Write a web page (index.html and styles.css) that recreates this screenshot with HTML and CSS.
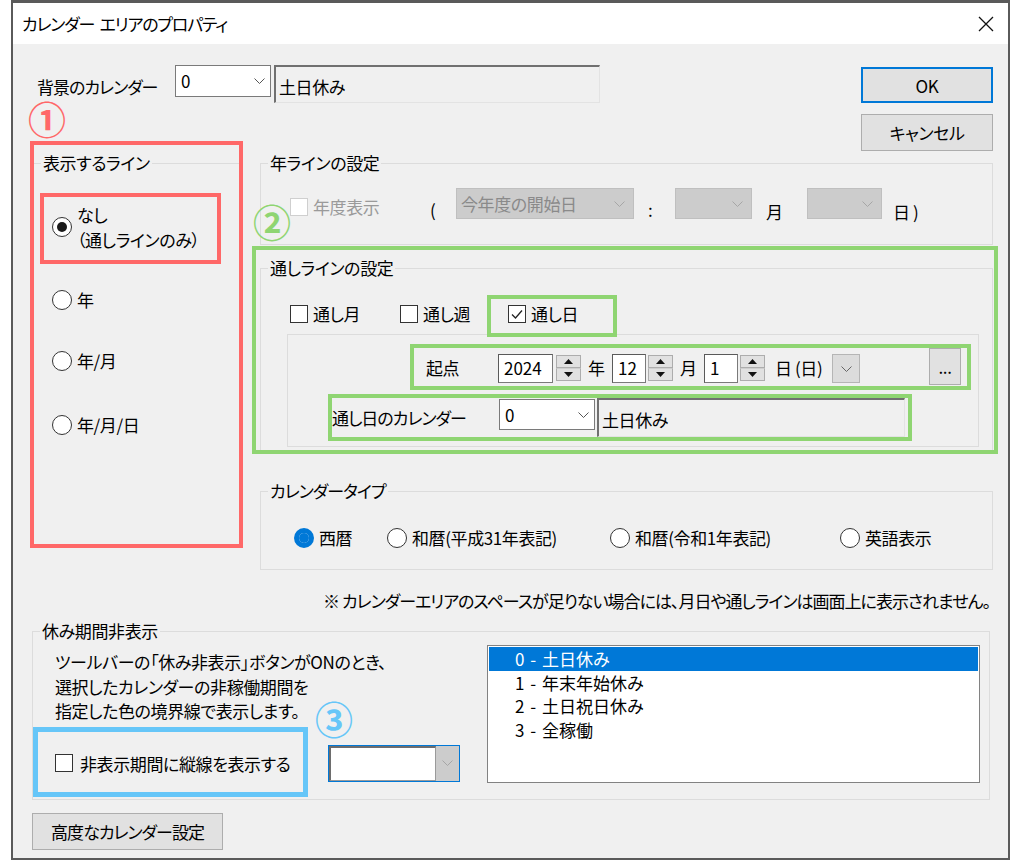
FILE: index.html
```html
<!DOCTYPE html>
<html lang="ja">
<head>
  <meta charset="UTF-8">
  <title>カレンダー エリアのプロパティ</title>
  <link rel="stylesheet" href="styles.css">
</head>
<body>
  <div class="win">
    <div class="titlebar">
      <span class="title">カレンダー エリアのプロパティ</span>
      <svg class="close" width="16" height="16" viewBox="0 0 16 16"><path d="M1 1L15 15M15 1L1 15" stroke="#111" stroke-width="1.3"/></svg>
    </div>

    <div class="client">
      <div class="head">
        <div class="bgcal">
          <span class="lbl">背景のカレンダー</span>
          <div class="combo"><span>0</span><svg width="11" height="6" viewBox="0 0 11 6"><path d="M0.5 0.5L5.5 5.5L10.5 0.5" fill="none" stroke="#555"/></svg></div>
          <div class="static">土日休み</div>
        </div>
        <div class="btns">
          <button class="btn def">OK</button>
          <button class="btn cancel">キャンセル</button>
        </div>
      </div>

      <div class="main">
        <fieldset class="grp f-lines">
          <legend>表示するライン</legend>
          <div class="lines-body">
            <div class="opt o1"><span class="rb on"></span><span>なし<br>（通しラインのみ）</span></div>
            <div class="opt o2"><span class="rb"></span><span>年</span></div>
            <div class="opt o3"><span class="rb"></span><span>年/月</span></div>
            <div class="opt o4"><span class="rb"></span><span>年/月/日</span></div>
          </div>
        </fieldset>

        <div class="rcol">
          <fieldset class="grp f-year">
            <legend>年ラインの設定</legend>
            <div class="yrow">
              <span class="cb dis"></span>
              <span class="t-nendo">年度表示</span>
              <span class="t-par">(</span>
              <div class="dcombo w178"><span>今年度の開始日</span><svg width="11" height="6" viewBox="0 0 11 6"><path d="M0.5 0.5L5.5 5.5L10.5 0.5" fill="none" stroke="#a6a6a6"/></svg></div>
              <span class="t-colon">:</span>
              <div class="dcombo w77"><span></span><svg width="11" height="6" viewBox="0 0 11 6"><path d="M0.5 0.5L5.5 5.5L10.5 0.5" fill="none" stroke="#a6a6a6"/></svg></div>
              <span class="t-mon">月</span>
              <div class="dcombo w75"><span></span><svg width="11" height="6" viewBox="0 0 11 6"><path d="M0.5 0.5L5.5 5.5L10.5 0.5" fill="none" stroke="#a6a6a6"/></svg></div>
              <span class="t-day">日 )</span>
            </div>
          </fieldset>

          <fieldset class="grp f-thru">
            <legend>通しラインの設定</legend>
            <div class="cbrow">
              <label class="chk c1"><span class="cb"></span>通し月</label>
              <label class="chk c2"><span class="cb"></span>通し週</label>
              <label class="chk"><span class="cb on"><svg width="16" height="16" viewBox="0 0 16 16"><path d="M3 8.5L6.5 12L13 4.5" fill="none" stroke="#222" stroke-width="1.3"/></svg></span>通し日</label>
            </div>
            <div class="panel">
              <div class="prow1">
                <span class="t-kiten">起点</span>
                <div class="num w55">2024</div>
                <div class="spin"><b><svg width="9" height="5" viewBox="0 0 9 5"><path d="M0 5L4.5 0L9 5Z" fill="#111"/></svg></b><b><svg width="9" height="5" viewBox="0 0 9 5"><path d="M0 0L4.5 5L9 0Z" fill="#111"/></svg></b></div>
                <span class="t-unit">年</span>
                <div class="num w34">12</div>
                <div class="spin"><b><svg width="9" height="5" viewBox="0 0 9 5"><path d="M0 5L4.5 0L9 5Z" fill="#111"/></svg></b><b><svg width="9" height="5" viewBox="0 0 9 5"><path d="M0 0L4.5 5L9 0Z" fill="#111"/></svg></b></div>
                <span class="t-unit">月</span>
                <div class="num w34">1</div>
                <div class="spin"><b><svg width="9" height="5" viewBox="0 0 9 5"><path d="M0 5L4.5 0L9 5Z" fill="#111"/></svg></b><b><svg width="9" height="5" viewBox="0 0 9 5"><path d="M0 0L4.5 5L9 0Z" fill="#111"/></svg></b></div>
                <span class="t-wd">日 (日)</span>
                <div class="ddbtn"><svg width="11" height="6" viewBox="0 0 11 6"><path d="M0.5 0.5L5.5 5.5L10.5 0.5" fill="none" stroke="#666"/></svg></div>
                <button class="btn more">...</button>
              </div>
              <div class="prow2">
                <span class="t-dcal">通し日のカレンダー</span>
                <div class="combo c2"><span>0</span><svg width="11" height="6" viewBox="0 0 11 6"><path d="M0.5 0.5L5.5 5.5L10.5 0.5" fill="none" stroke="#555"/></svg></div>
                <div class="static s2">土日休み</div>
              </div>
            </div>
          </fieldset>

          <fieldset class="grp f-type">
            <legend>カレンダータイプ</legend>
            <div class="trow">
              <div class="opt t1"><span class="rb on blue"></span><span>西暦</span></div>
              <div class="opt t2"><span class="rb"></span><span>和暦(平成31年表記)</span></div>
              <div class="opt t3"><span class="rb"></span><span>和暦(令和1年表記)</span></div>
              <div class="opt"><span class="rb"></span><span>英語表示</span></div>
            </div>
          </fieldset>
        </div>
      </div>

      <p class="note">※ カレンダーエリアのスペースが足りない場合には、月日や通しラインは画面上に表示されません。</p>

      <fieldset class="grp f-hide">
        <legend>休み期間非表示</legend>
        <div class="hide-body">
          <div class="hide-left">
            <p class="desc">ツールバーの「休み非表示」ボタンがONのとき、<br>選択したカレンダーの非稼働期間を<br>指定した色の境界線で表示します。</p>
            <div class="hide-row">
              <label class="chk ch"><span class="cb"></span>非表示期間に縦線を表示する</label>
              <div class="ccombo"><span class="cfield"></span><span class="cbtn"><svg width="11" height="6" viewBox="0 0 11 6"><path d="M0.5 0.5L5.5 5.5L10.5 0.5" fill="none" stroke="#a6a6a6"/></svg></span></div>
            </div>
          </div>
          <ul class="lb">
            <li class="sel">0 - 土日休み</li>
            <li>1 - 年末年始休み</li>
            <li>2 - 土日祝日休み</li>
            <li>3 - 全稼働</li>
          </ul>
        </div>
      </fieldset>

      <button class="btn adv">高度なカレンダー設定</button>
    </div>
  </div>

  <!-- 注記の枠と番号 -->
  <div class="mark red m-lines"></div>
  <div class="mark red m-none"></div>
  <div class="mark green m-thru"></div>
  <div class="mark green m-day"></div>
  <div class="mark green m-start"></div>
  <div class="mark green m-cal"></div>
  <div class="mark blue m-hide"></div>
  <span class="num-mark n1">①</span>
  <span class="num-mark n2">②</span>
  <span class="num-mark n3">③</span>
</body>
</html>
```

FILE: styles.css
```css
* {
  box-sizing: border-box;
}

body {
  margin: 0;
  width: 1017px;
  height: 863px;
  overflow: hidden;
  position: relative;
  background: #ffffff;
  font-family: "Noto Sans CJK JP", "Noto Sans", sans-serif;
  font-size: 17px;
  font-feature-settings: "palt";
  letter-spacing: -0.4px;
  color: #000;
}

/* ウィンドウ枠 */
.win {
  margin-left: 11px;
  width: 999px;
  height: 860px;
  border: 2px solid #5a5a5a;
  border-top-width: 3px;
  background: #f0f0f0;
  display: flex;
  flex-direction: column;
}

.titlebar {
  flex: none;
  height: 41px;
  background: #fff;
  display: flex;
  align-items: center;
  justify-content: space-between;
  padding: 0 14px 0 9px;
}

.title {
  letter-spacing: -1.2px;
  word-spacing: 3px;
}

.client {
  flex: 1;
  padding: 21px 15px 0 20px;
}

/* 共通コントロール */
.btn {
  font: inherit;
  letter-spacing: inherit;
  color: #000;
  background: #e1e1e1;
  border: 1px solid #adadad;
  padding: 0;
  margin: 0;
}

.combo {
  width: 96px;
  height: 32px;
  background: #fff;
  border: 1px solid #7a7a7a;
  display: flex;
  align-items: center;
  justify-content: space-between;
  padding: 0 5px 0 5px;
  line-height: 20px;
}

.static {
  width: 326px;
  height: 38px;
  margin-left: 3px;
  border-style: solid;
  border-width: 2px 1px 1px 2px;
  border-color: #707070 #e3e3e3 #e3e3e3 #707070;
  padding: 8px 0 0 3px;
  line-height: 24px;
}

.cb {
  flex: none;
  width: 18px;
  height: 18px;
  border: 1px solid #333;
  background: #fff;
  display: flex;
  align-items: center;
  justify-content: center;
}

.cb.dis {
  border-color: #cfcfcf;
}

.rb {
  flex: none;
  width: 20px;
  height: 20px;
  border-radius: 50%;
  border: 1.5px solid #333;
  background: #fff;
  display: flex;
  align-items: center;
  justify-content: center;
}

.rb.on::after {
  content: "";
  width: 10px;
  height: 10px;
  border-radius: 50%;
  background: #1a1a1a;
}

.rb.blue {
  border-color: #0078d7;
}

.rb.blue::after {
  background: #0078d7;
}

.opt {
  display: flex;
  align-items: center;
  gap: 5px;
  line-height: 25px;
}

.chk {
  display: flex;
  align-items: center;
  gap: 5px;
}

fieldset.grp {
  margin: 0;
  padding: 0;
  min-width: 0;
  border: 1px solid #dcdcdc;
}

fieldset.grp legend {
  margin-left: 7px;
  padding: 0 2px;
  line-height: 20px;
  height: 20px;
}

/* ヘッダー行 */
.head {
  display: flex;
  justify-content: space-between;
  height: 86px;
}

.bgcal {
  display: flex;
  align-items: flex-start;
}

.bgcal .lbl {
  width: 138px;
  margin: 12px 0 0 4px;
  line-height: 20px;
  letter-spacing: -1px;
}

.btns {
  display: flex;
  flex-direction: column;
  gap: 11px;
  padding-top: 2px;
}

.btns .btn {
  width: 132px;
  height: 36px;
}

.btn.def {
  border: 2px solid #0078d7;
}

.btn.cancel {
  height: 37px;
}

/* メイン */
.main {
  display: flex;
  align-items: flex-start;
  gap: 17px;
  margin-top: 2px;
}

.f-lines {
  width: 210px;
  height: 392px;
}

.lines-body {
  padding-left: 18px;
}

.lines-body .o1 { margin-top: 29px; }
.lines-body .o2 { margin-top: 35px; }
.lines-body .o3 { margin-top: 36px; }
.lines-body .o4 { margin-top: 39px; }

.rcol {
  width: 733px;
  display: flex;
  flex-direction: column;
}

/* 年ライン */
.f-year {
  height: 92px;
  padding-top: 15px !important;
}

.yrow {
  display: flex;
  align-items: flex-start;
  line-height: 20px;
  margin-left: 29px;
}

.yrow .cb { margin-top: 10px; }

.t-nendo {
  width: 117px;
  margin: 9px 0 0 5px;
  color: #9a9a9a;
}

.t-par {
  width: 26px;
  margin-top: 12px;
}

.dcombo {
  height: 31px;
  background: #cccccc;
  border: 1px solid #bfbfbf;
  display: flex;
  align-items: center;
  justify-content: space-between;
  padding: 0 8px 0 4px;
  color: #8a8a8a;
}

.w178 { width: 178px; }
.w77 { width: 77px; }
.w75 { width: 75px; }

.t-colon {
  width: 27px;
  margin: 12px 0 0 14px;
}

.t-mon {
  width: 41px;
  margin: 14px 0 0 14px;
}

.t-day {
  margin: 14px 0 0 11px;
}

/* 通しライン */
.f-thru {
  margin-top: 13px !important;
  height: 194px;
}

.cbrow {
  display: flex;
  align-items: center;
  height: 20px;
  margin: 26px 0 0 29px;
  line-height: 20px;
}

.cbrow .c1 { width: 110px; }
.cbrow .c2 { width: 108px; }

.panel {
  margin: 10px 0 0 26px;
  width: 692px;
  height: 113px;
  border: 1px solid #dcdcdc;
}

.prow1 {
  display: flex;
  align-items: flex-start;
  height: 29px;
  margin-top: 19px;
  line-height: 20px;
}

.t-kiten {
  width: 72px;
  margin: 4px 0 0 138px;
}

.num {
  height: 29px;
  background: #fff;
  border: 1px solid #7a7a7a;
  border-top-color: #5a5a5a;
  border-left-color: #5a5a5a;
  padding: 3px 0 0 5px;
  letter-spacing: 0;
}

.w55 { width: 55px; }
.w34 { width: 34px; }

.spin {
  display: flex;
  flex-direction: column;
  margin: 1px 0 0 2px;
  width: 25px;
}

.prow1 .w55 + .spin { margin-left: 3px; }

.spin b {
  height: 13px;
  background: #e1e1e1;
  border: 1px solid #adadad;
  display: flex;
  align-items: center;
  justify-content: center;
}

.spin b + b { border-top-color: #cfcfcf; }

.t-unit {
  width: 24px;
  margin: 4px 0 0 7px;
}

.t-wd {
  width: 57px;
  margin: 4px 0 0 10px;
}

.ddbtn {
  width: 28px;
  height: 29px;
  background: #dcdcdc;
  border: 1px solid #b5b5b5;
  display: flex;
  align-items: center;
  justify-content: center;
}

.btn.more {
  width: 32px;
  height: 37px;
  margin: -6px 0 0 69px;
  line-height: 20px;
}

.prow2 {
  display: flex;
  align-items: flex-start;
  margin-top: 15px;
  line-height: 20px;
}

.t-dcal {
  width: 167px;
  margin: 10px 0 0 44px;
  letter-spacing: -1px;
}

.combo.c2 {
  height: 31px;
  margin-top: 1px;
}

.static.s2 {
  width: 308px;
  height: 39px;
  margin-left: 2px;
}

/* カレンダータイプ */
.f-type {
  margin-top: 29px !important;
  height: 89px;
  padding-top: 24px !important;
}

.f-type legend {
  letter-spacing: -1px;
}

.trow {
  display: flex;
  line-height: 20px;
  margin-left: 33px;
}

.trow .t1 { width: 93px; }
.trow .t2 { width: 223px; }
.trow .t3 { width: 230px; }

.note {
  margin: 21px 3px 0 0;
  text-align: right;
  line-height: 20px;
  letter-spacing: -1px;
}

/* 休み期間非表示 */
.f-hide {
  margin: 10px 0 0 -1px !important;
  width: 958px;
  height: 179px;
  padding-top: 9px !important;
}

.hide-body {
  display: flex;
  align-items: flex-start;
  padding: 0 9px 0 22px;
}

.hide-left {
  width: 432px;
}

.desc {
  margin: 0;
  line-height: 24.5px;
}

.hide-row {
  display: flex;
  align-items: center;
  height: 37px;
  margin-top: 21px;
}

.chk.ch {
  width: 273px;
  gap: 7px;
}

.ccombo {
  width: 132px;
  height: 37px;
  border: 1px solid #0078d7;
  background: #cccccc;
  display: flex;
}

.cfield {
  width: 107px;
  background: #fff;
  border-style: solid;
  border-width: 2px 1px 1px 2px;
  border-color: #6d6d6d #9a9a9a #9a9a9a #6d6d6d;
}

.cbtn {
  flex: 1;
  display: flex;
  align-items: center;
  justify-content: center;
}

.lb {
  list-style: none;
  margin: -5px 0 0 0;
  padding: 1px;
  width: 493px;
  height: 138px;
  background: #fff;
  border: 1px solid #828282;
  letter-spacing: 0;
}

.lb li {
  height: 23.5px;
  line-height: 23.5px;
  padding-left: 26px;
  word-spacing: 2px;
}

.lb li.sel {
  background: #0078d7;
  color: #fff;
}

.btn.adv {
  display: block;
  margin: 13px 0 0 -1px;
  width: 191px;
  height: 37px;
  letter-spacing: -1px;
}

/* 注記の枠 */
.mark {
  position: absolute;
  border: 4px solid;
}

.red { border-color: #ff6868; }
.green { border-color: #8fd572; }
.blue { border-color: #66c6f8; border-width: 5px; }

.m-lines { left: 30px; top: 141px; width: 213px; height: 407px; }
.m-none { left: 40px; top: 193px; width: 181px; height: 71px; }
.m-thru { left: 252px; top: 246px; width: 746px; height: 208px; }
.m-day { left: 487px; top: 295px; width: 130px; height: 42px; }
.m-start { left: 410px; top: 344px; width: 561px; height: 46px; }
.m-cal { left: 328px; top: 394px; width: 584px; height: 47px; }
.m-hide { left: 33px; top: 727px; width: 275px; height: 70px; }

.num-mark {
  position: absolute;
  font-size: 38px;
  font-weight: bold;
  line-height: 34px;
  letter-spacing: 0;
}

.n1 { left: 28px; top: 101px; color: #ff6868; }
.n2 { left: 253px; top: 204px; color: #8fd572; }
.n3 { left: 315px; top: 701px; color: #66c6f8; }
```
